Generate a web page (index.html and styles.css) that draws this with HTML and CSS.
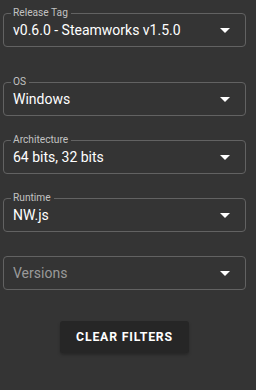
FILE: index.html
```html
<!DOCTYPE html>
<html lang="en">
<head>
<meta charset="utf-8">
<link rel="stylesheet" href="styles.css">
</head>
<body>
<div class="filters">
  <div class="field field-first">
    <span class="label">Release Tag</span>
    <span class="value">v0.6.0 - Steamworks v1.5.0</span>
    <svg class="arrow" viewBox="0 0 10 5" width="10" height="5"><path d="M0 0 L5 5 L10 0 Z" fill="#fff"/></svg>
  </div>
  <div class="field">
    <span class="label">OS</span>
    <span class="value">Windows</span>
    <svg class="arrow" viewBox="0 0 10 5" width="10" height="5"><path d="M0 0 L5 5 L10 0 Z" fill="#fff"/></svg>
  </div>
  <div class="field">
    <span class="label">Architecture</span>
    <span class="value">64 bits, 32 bits</span>
    <svg class="arrow" viewBox="0 0 10 5" width="10" height="5"><path d="M0 0 L5 5 L10 0 Z" fill="#fff"/></svg>
  </div>
  <div class="field">
    <span class="label">Runtime</span>
    <span class="value">NW.js</span>
    <svg class="arrow" viewBox="0 0 10 5" width="10" height="5"><path d="M0 0 L5 5 L10 0 Z" fill="#fff"/></svg>
  </div>
  <div class="field">
    <span class="value placeholder">Versions</span>
    <svg class="arrow" viewBox="0 0 10 5" width="10" height="5"><path d="M0 0 L5 5 L10 0 Z" fill="#fff"/></svg>
  </div>
  <div class="actions">
    <button class="clear">CLEAR FILTERS</button>
  </div>
</div>
</body>
</html>
```

FILE: styles.css
```css
html, body {
  margin: 0;
  padding: 0;
  background: #343434;
  height: 100%;
}
body {
  font-family: Roboto, "Liberation Sans", sans-serif;
  color: #fff;
}
.filters {
  display: flex;
  flex-direction: column;
  padding: 13px 0 0 3px;
  width: 243px;
}
.field {
  position: relative;
  box-sizing: border-box;
  height: 34px;
  border: 1px solid #626262;
  border-radius: 4px;
  display: flex;
  align-items: center;
  padding: 0 15px 0 9px;
  margin-bottom: 24px;
}
.field-first {
  margin-bottom: 35px;
}
.label {
  position: absolute;
  top: -7px;
  left: 7px;
  padding: 0 3px 0 2px;
  background: #343434;
  font-size: 10.2px;
  line-height: 12px;
  color: #c2c2c2;
}
.value {
  flex: 1;
  font-size: 14px;
  line-height: 16px;
  color: #fff;
  white-space: nowrap;
}
.placeholder {
  color: #9a9a9a;
}
.arrow {
  display: block;
  flex: none;
}
.actions {
  display: flex;
  justify-content: center;
  margin-top: 7px;
}
.clear {
  height: 32px;
  padding: 0 16px;
  border: none;
  border-radius: 3px;
  background: #262626;
  color: #fff;
  font-family: Roboto, "Liberation Sans", sans-serif;
  font-weight: 700;
  font-size: 12.3px;
  letter-spacing: 0.8px;
  box-shadow: 0 2px 3px rgba(0,0,0,0.25);
}
```
